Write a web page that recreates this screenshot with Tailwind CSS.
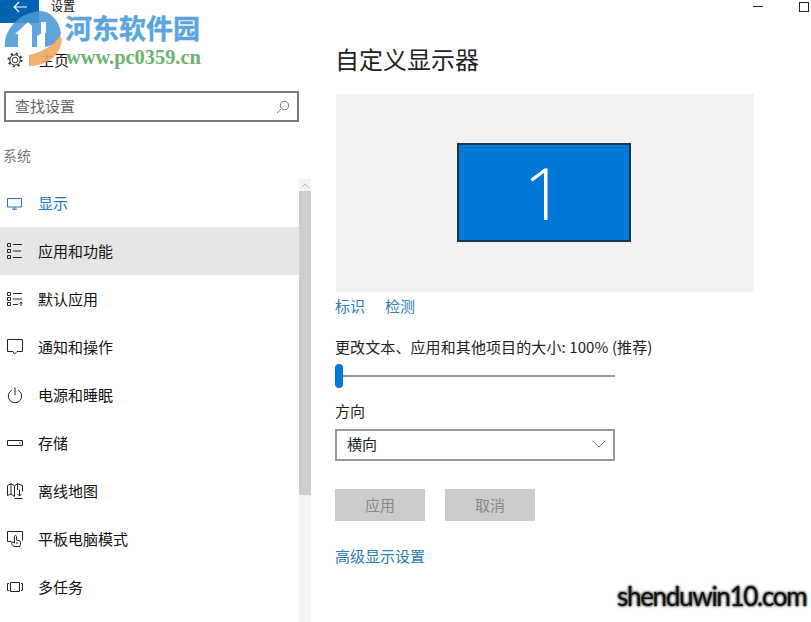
<!DOCTYPE html>
<html lang="zh-CN">
<head>
    <meta charset="UTF-8">
    <title>设置</title>
    <script src="https://cdn.jsdelivr.net/npm/@tailwindcss/browser@4"></script>
</head>
<body class="bg-white overflow-hidden font-['Noto_Sans_CJK_SC','Liberation_Sans',sans-serif]">
    <div class="relative w-[811px] h-[622px] overflow-hidden flex">

        <!-- sidebar -->
        <aside class="w-[311px] h-[622px] flex flex-col shrink-0">
            <div class="h-[24px] flex items-start">
                <div class="w-[39px] h-[23px] bg-[#0063b1] flex justify-center pt-[1px]">
                    <svg width="14" height="12" viewBox="0 0 14 12" fill="none" stroke="#fff" stroke-width="1.2"><path d="M6 1 1.2 6 6 11M1.2 6H14"/></svg>
                </div>
                <span class="ml-[12px] text-[12px] leading-[12px] text-[#111]">设置</span>
            </div>
            <div class="mt-[12px] h-[48px] flex items-center pl-[7px]">
                <svg width="16" height="16" viewBox="0 0 16 16" fill="none" stroke="#333" stroke-width="1"><circle cx="8" cy="8" r="2.800"/><circle cx="8" cy="8" r="5.200"/><circle cx="8" cy="8" r="6.500" stroke-width="2" stroke-dasharray="2 3.100"/></svg>
                <span class="ml-[16px] text-[15px] text-[#111]">主页</span>
            </div>
            <div class="mt-[7px] mx-[4px] w-[295px] h-[31px] border-2 border-[#7a7a7a] flex items-center justify-between pl-[9px] pr-[7px]">
                <span class="text-[15px] text-[#666]">查找设置</span>
                <svg width="14" height="14" viewBox="0 0 14 14" fill="none" stroke="#777" stroke-width="1"><circle cx="8.500" cy="5.500" r="4.200"/><path d="M5.500 8.500 1 13"/></svg>
            </div>
            <div class="mt-[22px] h-[22px] pl-[3px] text-[14px] leading-[22px] text-[#777]">系统</div>
            <div class="mt-[13px] flex flex-1 min-h-0">
                <nav class="w-[299px]">
                    <a class="h-[48px] flex items-center pl-[7px] text-[#1a7bb5]">
                        <svg class="w-[16px] h-[16px] shrink-0" viewBox="0 0 16 16" fill="none" stroke="#1a7bb5" stroke-width="1"><path d="M.5 3.500h14v8.500H.5zM7.500 12v2M5 14.200h5"/></svg>
                        <span class="ml-[15px] text-[15px]">显示</span>
                    </a>
                    <a class="h-[48px] flex items-center pl-[7px] bg-[#e6e6e6] text-[#111]">
                        <svg class="w-[16px] h-[16px] shrink-0" viewBox="0 0 16 16" fill="none" stroke="#222" stroke-width="1"><path d="M.5 .5h3v3h-3zM.5 6.500h3v3h-3zM.5 12.500h3v3h-3zM6 1.500h9M6 8h8M6 14.500h9"/></svg>
                        <span class="ml-[15px] text-[15px]">应用和功能</span>
                    </a>
                    <a class="h-[48px] flex items-center pl-[7px] text-[#111]">
                        <svg class="w-[16px] h-[16px] shrink-0" viewBox="0 0 16 16" fill="none" stroke="#222" stroke-width="1"><path d="M.5 1.500h3v3h-3zM.5 6.500h3v3h-3zM.5 11.500h3v3h-3zM6 2.500h9M6 8h9M6 13.500h5M14 15v-4M12.500 12.500 14 11l1.500 1.500"/></svg>
                        <span class="ml-[15px] text-[15px]">默认应用</span>
                    </a>
                    <a class="h-[48px] flex items-center pl-[7px] text-[#111]">
                        <svg class="w-[16px] h-[16px] shrink-0" viewBox="0 0 16 16" fill="none" stroke="#222" stroke-width="1"><path d="M.5 .5h15v12H10L7.500 15 6 12.500H.5z"/></svg>
                        <span class="ml-[15px] text-[15px]">通知和操作</span>
                    </a>
                    <a class="h-[48px] flex items-center pl-[7px] text-[#111]">
                        <svg class="w-[16px] h-[16px] shrink-0" viewBox="0 0 16 16" fill="none" stroke="#222" stroke-width="1"><path d="M4.800 3.200a6.700 6.700 0 1 0 6.400 0M8 .5v7.500"/></svg>
                        <span class="ml-[15px] text-[15px]">电源和睡眠</span>
                    </a>
                    <a class="h-[48px] flex items-center pl-[7px] text-[#111]">
                        <svg class="w-[16px] h-[16px] shrink-0" viewBox="0 0 16 16" fill="none" stroke="#222" stroke-width="1"><path d="M.5 5.500h15v5H.5zM12 8h1.500"/></svg>
                        <span class="ml-[15px] text-[15px]">存储</span>
                    </a>
                    <a class="h-[48px] flex items-center pl-[7px] text-[#111]">
                        <svg class="w-[16px] h-[16px] shrink-0" viewBox="0 0 16 16" fill="none" stroke="#222" stroke-width="1"><path d="M.5 2.500 4 .8l3.500 2 3-2 5 1.700v6M.5 2.500v10L4 11l3.500 2.500M4 .8V11M7.500 2.800v10.700M10.500 .8V7M12.500 6.500v6.500M10.500 11l2 2 2-2M7.500 15.500h8"/></svg>
                        <span class="ml-[15px] text-[15px]">离线地图</span>
                    </a>
                    <a class="h-[48px] flex items-center pl-[7px] text-[#111]">
                        <svg class="w-[16px] h-[16px] shrink-0" viewBox="0 0 16 16" fill="none" stroke="#222" stroke-width="1"><path d="M4.500 10.500h-4V.5h15v9M7 15.500c-1.500-1-2.500-2.500-2.500-4l1.500-.5 1.500 1V5.500a1 1 0 0 1 2 0V9l3 .8c.6.200 1 .7 1 1.500v2l-.8 2.200zM10 11v2"/></svg>
                        <span class="ml-[15px] text-[15px]">平板电脑模式</span>
                    </a>
                    <a class="h-[48px] flex items-center pl-[7px] text-[#111]">
                        <svg class="w-[16px] h-[16px] shrink-0" viewBox="0 0 16 16" fill="none" stroke="#222" stroke-width="1"><path d="M3.500 3.500h9v9h-9zM2 4.500H.5v7H2M14 4.500h1.500v7H14"/></svg>
                        <span class="ml-[15px] text-[15px]">多任务</span>
                    </a>
                </nav>
                <div class="w-[12px] flex flex-col bg-[#f4f4f4]">
                    <div class="h-[12px] flex items-center justify-center">
                        <svg width="8" height="5" viewBox="0 0 8 5" fill="none" stroke="#b5b5b5" stroke-width="1"><path d="M.5 4.500 4 1l3.500 3.500"/></svg>
                    </div>
                    <div class="h-[304px] bg-[#cdcdcd]"></div>
                </div>
            </div>
        </aside>

        <!-- display settings -->
        <main class="flex-1 pl-[24px] pt-[41px]">
            <h1 class="h-[36px] text-[24px] leading-[36px] text-[#222]">自定义显示器</h1>
            <div class="mt-[17px] ml-[1px] w-[418px] h-[198px] bg-[#f2f2f2] flex items-center justify-center pr-[2px] pb-[2px]">
                <div class="w-[174px] h-[99px] bg-[#0078d7] border-2 border-[#1c3553] flex items-center justify-center">
                    <span class="text-[72px] leading-[72px] font-light text-white font-['Open_Sans',sans-serif]">1</span>
                </div>
            </div>
            <div class="mt-[2px] h-[24px] flex gap-[20px] text-[15px] leading-[24px] text-[#2b7db5]">
                <span>标识</span>
                <span>检测</span>
            </div>
            <p class="mt-[17px] h-[24px] text-[15px] leading-[24px] tracking-[0.1px] text-[#222]">更改文本、应用和其他项目的大小: 100% (推荐)</p>
            <div class="mt-[5px] w-[280px] h-[24px] flex items-center">
                <div class="w-[8px] h-[24px] rounded-[4px] bg-[#0078d7]"></div>
                <div class="flex-1 h-[2px] bg-[#999]"></div>
            </div>
            <p class="mt-[11px] h-[24px] text-[15px] leading-[24px] text-[#222]">方向</p>
            <div class="mt-[6px] w-[280px] h-[32px] border-2 border-[#999] flex items-center justify-between pl-[10px] pr-[7px] pb-[2px]">
                <span class="text-[15px] text-[#222]">横向</span>
                <svg width="14" height="8" viewBox="0 0 14 8" fill="none" stroke="#777" stroke-width="1"><path d="M.7.7 7 7 13.300.7"/></svg>
            </div>
            <div class="mt-[28px] flex gap-[20px]">
                <button class="w-[90px] h-[32px] bg-[#ccc] text-[15px] text-[#888]">应用</button>
                <button class="w-[90px] h-[32px] bg-[#ccc] text-[15px] text-[#888]">取消</button>
            </div>
            <p class="mt-[23px] h-[24px] text-[15px] leading-[24px] text-[#2b7db5]">高级显示设置</p>
        </main>

        <!-- window buttons -->
        <div class="absolute top-[6px] left-[753px] w-[10px] h-px bg-[#222]"></div>
        <div class="absolute top-[2px] left-[799px] w-[10px] h-[10px] border border-[#222]"></div>

        <!-- watermarks on top of the page -->
        <svg class="absolute left-0 top-0" width="70" height="75" viewBox="0 0 70 75">
            <path d="M5 47C3 30 20 12 40 11 50 11 59 20 61 33 60 41 52 46 45 47V31L37 36V47Z" fill="#4a97d6" opacity=".88"/>
            <path d="M29 66V55C40 53 53 46 60 36 63 38 62 44 59 50 54 60 42 66 29 66Z" fill="#f0a860" opacity=".9"/>
            <path d="M15 34 28 22 32 26V47H18V34Z" fill="#fff"/>
            <path d="M41 22H46V33H41Z" fill="#fff"/>
        </svg>
        <div class="absolute left-[65px] top-[14px] text-[27px] leading-[28px] font-bold text-[#5aa5dc] [-webkit-text-stroke:0.4px_#5aa5dc]">河东软件园</div>
        <div class="absolute left-[66px] top-[45px] text-[20.400px] leading-[24px] font-bold text-[#6cb26c] font-['Liberation_Serif',serif]">www.pc0359.cn</div>
        <div class="absolute left-[617px] top-[578px] text-[26px] leading-[36px] text-[#111] font-['Lato',sans-serif] tracking-[-1.300px] [text-shadow:0_0_2px_#666,0_0_3px_#666,0_0_3px_#777]">shenduwin10.com</div>
    </div>
</body>
</html>
